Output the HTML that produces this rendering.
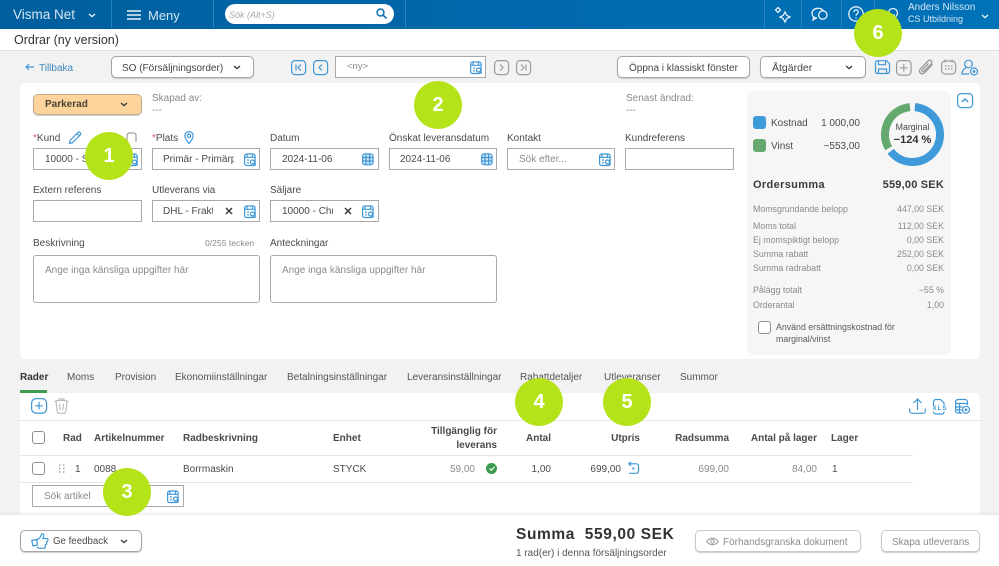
<!DOCTYPE html>
<html lang="sv"><head><meta charset="utf-8"><title>Ordrar</title>
<style>
html,body{margin:0;padding:0}
body{width:999px;height:566px;overflow:hidden;background:#f2f2f2;position:relative;font-family:"Liberation Sans",sans-serif;font-size:10px;color:#4a4a4a}
#w{position:absolute;inset:0;filter:blur(.35px)}
.a{position:absolute;box-sizing:border-box}
.t{position:absolute;white-space:nowrap;line-height:14px}
.t:not([style*="font-size"]):not(.s){margin-top:2px}
.r{text-align:right}
.g{color:#8a8a8a}
.b{font-weight:bold}
.s{font-size:8.8px}
.inp{position:absolute;box-sizing:border-box;height:22px;border:1px solid #a9a9a9;background:#fff}
.btn{position:absolute;box-sizing:border-box;height:22px;border:1px solid #a5a5a5;background:#fff;border-radius:5px;box-shadow:0 1px 1px #ccc}
.c{position:absolute;width:48px;height:48px;border-radius:50%;background:#b5e31a;color:#fff;font-weight:bold;font-size:20px;line-height:48px;text-align:center;z-index:5}
svg{position:absolute;overflow:visible;fill:none}
.bl{stroke:#3f97d6;stroke-width:1.2}
.gr{stroke:#9b9b9b;stroke-width:1.2}
.wh{stroke:#e8f2f9;stroke-width:1.3}
.sep{position:absolute;top:0;width:1px;height:28px;background:#2a83bd}
.cb{position:absolute;box-sizing:border-box;width:13px;height:13px;border:1px solid #8f8f8f;border-radius:3px;background:#fff}
.tab{position:absolute;top:371px;white-space:nowrap;line-height:14px;color:#555}
.line{position:absolute;height:1px;background:#e6e6e6}
</style></head><body>
<svg width="0" height="0" style="position:absolute"><defs>
<g id="look"><rect x=".6" y="1" width="10.5" height="11.5" rx="2"/><path d="M.6 4.300h10.500M3 1v3.300M8.500 1v3.300M3 7h2M3 9.800h2"/><circle cx="8.500" cy="9" r="2"/><path d="M10 10.500l1.800 1.800"/></g>
<g id="cal"><rect x=".6" y=".8" width="10.5" height="11" rx="2.500" fill="#cfe6f6"/><path d="M4 .8v11M7.600 .8v11M.6 4.500h10.500M.6 8h10.500"/></g>
<path id="chev" d="M0 0l3 2.600L6 0" stroke="#3d3d3d" stroke-width="1.400"/>
</defs></svg>
<div id="w">
<!-- top bar -->
<div class="a" style="left:0;top:0;width:999px;height:29px;background:linear-gradient(90deg,#005f9e 0,#0066a8 40%,#0072b9 100%)"></div>
<div class="sep" style="left:111px"></div><div class="sep" style="left:213px"></div><div class="sep" style="left:405px"></div>
<div class="sep" style="left:764px"></div><div class="sep" style="left:801px"></div><div class="sep" style="left:841px"></div><div class="sep" style="left:874px"></div>
<span class="t" style="left:13px;top:8px;font-size:13.500px;color:#d5e6f2">Visma Net</span>
<svg style="left:89px;top:14px" width="7" height="4"><path d="M0 0l3 2.600L6 0" stroke="#e8f2f9" stroke-width="1.400"/></svg>
<svg style="left:127px;top:10px" width="14" height="10"><path d="M0 1h14M0 5h14M0 9h14" stroke="#eaf3f9" stroke-width="1.600"/></svg>
<span class="t" style="left:148px;top:9px;font-size:13px;color:#d5e6f2">Meny</span>
<div class="a" style="left:225px;top:4px;width:169px;height:20px;border-radius:10px;background:#fff"></div>
<span class="t" style="left:229px;top:8px;font-size:9px;font-style:italic;color:#a8a8a8">Sök (Alt+S)</span>
<svg style="left:376px;top:8px" width="12" height="12"><circle cx="4.500" cy="4.500" r="3.400" stroke="#1678bb" stroke-width="1.600"/><path d="M7 7l3.500 3.500" stroke="#1678bb" stroke-width="1.800"/></svg>
<svg class="wh" style="left:776px;top:5px" width="18" height="18"><path d="M9 7l1.700 3.300L14 12l-3.300 1.700L9 17l-1.700-3.300L4 12l3.300-1.700z"/><path d="M2 2.500L4.500 5 2 7.500-.5 5z"/></svg>
<svg class="wh" style="left:811px;top:7px" width="17" height="14"><path d="M6 11C3 11 1 9 1 6.500 1 3.500 3.500 1.300 7 1.300c2.500 0 4.500 1 5.500 2.700"/><path d="M2.800 9.500L2 13l3.500-2"/><circle cx="11.800" cy="8" r="4.200"/></svg>
<svg class="wh" style="left:848px;top:6px" width="16" height="16"><circle cx="8" cy="8" r="7.200"/><path d="M5.800 6.200c0-3 4.500-3 4.500-.2 0 1.800-2.300 1.800-2.300 3.800M8 11.500v1.200"/></svg>
<svg class="wh" style="left:887px;top:7px" width="12" height="14"><circle cx="6" cy="6" r="4.500"/><path d="M4 8h4"/></svg>
<span class="t" style="left:908px;top:1px;font-size:10px;color:#d5e6f2">Anders Nilsson</span>
<span class="t" style="left:908px;top:12px;font-size:9px;color:#d5e6f2">CS Utbildning</span>
<svg style="left:982px;top:15px" width="7" height="4"><path d="M0 0l3 2.600L6 0" stroke="#e8f2f9" stroke-width="1.400"/></svg>
<!-- title -->
<div class="a" style="left:0;top:29px;width:999px;height:22px;background:#fff;border-bottom:1px solid #e2e2e2"></div>
<span class="t" style="left:14px;top:33px;font-size:12.500px;color:#333">Ordrar (ny version)</span>
<!-- toolbar -->
<svg class="bl" style="left:25px;top:63px" width="9" height="8"><path d="M9 4H1M4 1L1 4l3 3"/></svg>
<span class="t" style="left:39px;top:60px;color:#3f87bd">Tillbaka</span>
<div class="btn" style="left:111px;top:56px;width:143px"></div>
<span class="t" style="left:122px;top:60px;color:#444">SO (Försäljningsorder)</span>
<svg style="left:234px;top:66px" width="6" height="4"><use href="#chev"/></svg>
<svg class="bl" style="left:291px;top:60px" width="14" height="14"><rect x=".6" y=".6" width="14" height="14" rx="3.500"/><path d="M5 4.500v6M10 4.500L7 7.500l3 3"/></svg>
<svg class="bl" style="left:313px;top:60px" width="14" height="14"><rect x=".6" y=".6" width="14" height="14" rx="3.500"/><path d="M9 4.500L6 7.500l3 3"/></svg>
<div class="inp" style="left:335px;top:56px;width:151px"></div>
<span class="t" style="left:347px;top:60px;font-size:9.500px;color:#8a8a8a">&lt;ny&gt;</span>
<svg class="bl" style="left:470px;top:61px" width="12" height="13"><use href="#look"/></svg>
<svg class="gr" style="left:494px;top:60px" width="14" height="14"><rect x=".6" y=".6" width="14" height="14" rx="3.500"/><path d="M6 4.500l3 3-3 3"/></svg>
<svg class="gr" style="left:516px;top:60px" width="14" height="14"><rect x=".6" y=".6" width="14" height="14" rx="3.500"/><path d="M5 4.500l3 3-3 3M10 4.500v6"/></svg>
<div class="btn" style="left:617px;top:56px;width:133px"></div>
<span class="t" style="left:629px;top:60px;color:#444">Öppna i klassiskt fönster</span>
<div class="btn" style="left:760px;top:56px;width:106px"></div>
<span class="t" style="left:772px;top:61px;font-size:10.500px;color:#444">Åtgärder</span>
<svg style="left:846px;top:66px" width="6" height="4"><use href="#chev"/></svg>
<svg class="bl" style="left:875px;top:60px" width="15" height="14"><path d="M2.500.7h9l3 3v7.800a2 2 0 0 1-2 2h-10a2 2 0 0 1-2-2V2.700a2 2 0 0 1 2-2z"/><path d="M3.500.7v4h7v-4M3.500 13.500V9h8v4.500"/></svg>
<svg class="gr" style="left:896px;top:60px" width="15" height="15"><rect x=".6" y=".6" width="14.500" height="14.500" rx="3.500"/><path d="M7.800 4v7.500M4 7.800h7.500"/></svg>
<svg class="gr" style="left:918px;top:59px" width="16" height="16"><path d="M14.500 5.500L6.500 13.800c-3 2.500-6.500-.5-4.300-3.800L10 2c2-2 5.200.3 3.300 2.800L6 12.300c-1 1-2.700 0-1.800-1.300L10.500 4.500" stroke-width="1.300"/></svg>
<svg class="gr" style="left:941px;top:59px" width="15" height="15"><rect x=".6" y="2" width="14" height="13" rx="3.500"/><path d="M4 .5v3M11 .5v3"/><path d="M4 7h1.500M7 7h1.500M10 7h1.500M4 10h1.500M7 10h1.500M10 10h1.500" stroke-width="1.400"/></svg>
<svg class="bl" style="left:961px;top:59px" width="17" height="17"><circle cx="7.500" cy="5" r="3.800"/><path d="M5 8.500C3 10 1 12 .8 15h7.500"/><circle cx="13" cy="12.500" r="3.500"/><circle cx="13" cy="12.500" r=".8" fill="#3f97d6"/></svg>
<!-- main card -->
<div class="a" style="left:20px;top:83px;width:960px;height:276px;background:#fff;border-radius:6px"></div>
<div class="btn" style="left:33px;top:94px;width:109px;height:21px;background:#fdd49b;border-color:#c5ad8b"></div>
<span class="t b" style="left:45px;top:96px;color:#4a4136">Parkerad</span>
<svg style="left:121px;top:103px" width="6" height="4"><use href="#chev"/></svg>
<span class="t g" style="left:152px;top:90px">Skapad av:</span><span class="t g" style="left:152px;top:102px">---</span>
<span class="t g" style="left:626px;top:90px">Senast ändrad:</span><span class="t g" style="left:626px;top:102px">---</span>
<!-- labels row 1 -->
<span class="t" style="left:33px;top:130px"><span style="color:#d65a6c">*</span>Kund</span>
<svg class="bl" style="left:69px;top:131px" width="13" height="13"><path d="M1 9.500L9 1.500c1.500-1.200 3.500.8 2.300 2.300L3.300 11.800l-2.800.7zM8 2.500l2.500 2.500"/></svg>
<svg class="gr" style="left:126px;top:132px" width="11" height="13"><path d="M1 12V3.500A2.500 2.500 0 0 1 3.500 1h4A2.500 2.500 0 0 1 10 3.500V10"/></svg>
<span class="t" style="left:152px;top:130px"><span style="color:#d65a6c">*</span>Plats</span>
<svg class="bl" style="left:184px;top:131px" width="10" height="13"><path d="M5 12.500C3 10 .8 7.500.8 4.800a4.200 4.200 0 0 1 8.400 0C9.200 7.500 7 10 5 12.500z"/><circle cx="5" cy="4.800" r="1.700"/></svg>
<span class="t" style="left:270px;top:130px">Datum</span>
<span class="t" style="left:389px;top:130px">Önskat leveransdatum</span>
<span class="t" style="left:507px;top:130px">Kontakt</span>
<span class="t" style="left:625px;top:130px">Kundreferens</span>
<!-- inputs row 1 -->
<div class="inp" style="left:33px;top:148px;width:109px"></div><span class="t" style="left:45px;top:151px">10000 - Svensson</span>
<svg class="bl" style="left:126px;top:153px" width="12" height="13"><use href="#look"/></svg>
<div class="inp" style="left:152px;top:148px;width:108px"></div><span class="t" style="left:163px;top:151px;width:71px;overflow:hidden">Primär - Primärplats</span>
<svg class="bl" style="left:244px;top:153px" width="12" height="13"><use href="#look"/></svg>
<div class="inp" style="left:270px;top:148px;width:109px"></div><span class="t" style="left:282px;top:151px">2024-11-06</span>
<svg class="bl" style="left:362px;top:153px" width="12" height="12"><use href="#cal"/></svg>
<div class="inp" style="left:389px;top:148px;width:108px"></div><span class="t" style="left:400px;top:151px">2024-11-06</span>
<svg class="bl" style="left:481px;top:153px" width="12" height="12"><use href="#cal"/></svg>
<div class="inp" style="left:507px;top:148px;width:108px"></div><span class="t g" style="left:519px;top:151px">Sök efter...</span>
<svg class="bl" style="left:599px;top:153px" width="12" height="13"><use href="#look"/></svg>
<div class="inp" style="left:625px;top:148px;width:109px"></div>
<!-- row 2 -->
<span class="t" style="left:33px;top:182px">Extern referens</span>
<span class="t" style="left:152px;top:182px">Utleverans via</span>
<span class="t" style="left:270px;top:182px">Säljare</span>
<div class="inp" style="left:33px;top:200px;width:109px"></div>
<div class="inp" style="left:152px;top:200px;width:108px"></div><span class="t" style="left:163px;top:203px;width:50px;overflow:hidden">DHL - Frakt - express</span>
<svg style="left:225px;top:207px" width="8" height="8"><path d="M1 1l6 6M7 1L1 7" stroke="#3a3a3a" stroke-width="1.500"/></svg>
<svg class="bl" style="left:244px;top:205px" width="12" height="13"><use href="#look"/></svg>
<div class="inp" style="left:270px;top:200px;width:109px"></div><span class="t" style="left:282px;top:203px;width:51px;overflow:hidden">10000 - Christer</span>
<svg style="left:344px;top:207px" width="8" height="8"><path d="M1 1l6 6M7 1L1 7" stroke="#3a3a3a" stroke-width="1.500"/></svg>
<svg class="bl" style="left:362px;top:205px" width="12" height="13"><use href="#look"/></svg>
<!-- row 3 -->
<span class="t" style="left:33px;top:235px">Beskrivning</span>
<span class="t g" style="left:205px;top:236px;font-size:8.600px">0/255 tecken</span>
<span class="t" style="left:270px;top:235px">Anteckningar</span>
<div class="inp" style="left:33px;top:255px;width:227px;height:48px;border-radius:3px"></div>
<span class="t g" style="left:45px;top:262px">Ange inga känsliga uppgifter här</span>
<div class="inp" style="left:270px;top:255px;width:227px;height:48px;border-radius:3px"></div>
<span class="t g" style="left:282px;top:262px">Ange inga känsliga uppgifter här</span>
<!-- side panel -->
<div class="a" style="left:747px;top:91px;width:204px;height:264px;background:#f6f6f6;border-radius:6px"></div>
<svg class="bl" style="left:957px;top:93px" width="16" height="15"><rect x=".6" y=".6" width="15" height="14" rx="3.500"/><path d="M4.800 9l3.200-3 3.200 3" stroke-width="1.500"/></svg>
<div class="a" style="left:753px;top:116px;width:13px;height:13px;border-radius:3px;background:#3f9ada"></div>
<div class="a" style="left:753px;top:139px;width:13px;height:13px;border-radius:3px;background:#65a96f"></div>
<span class="t" style="left:771px;top:115px">Kostnad</span><span class="t r" style="right:139px;top:115px">1 000,00</span>
<span class="t" style="left:771px;top:138px">Vinst</span><span class="t r" style="right:139px;top:138px">−553,00</span>
<svg style="left:880px;top:102px" width="65" height="65" viewBox="0 0 65 65">
<circle cx="32.500" cy="32.500" r="27.500" stroke="#3f9ada" stroke-width="8" stroke-dasharray="109 64" transform="rotate(-85 32.500 32.500)"/>
<circle cx="32.500" cy="32.500" r="27.500" stroke="#65a96f" stroke-width="8" stroke-dasharray="55 118" transform="rotate(150 32.500 32.500)"/>
</svg>
<span class="t" style="left:880px;top:120px;width:65px;text-align:center;font-size:8.800px">Marginal</span>
<span class="t b" style="left:880px;top:133px;width:65px;text-align:center;font-size:11px;color:#333">−124 %</span>
<span class="t b" style="left:753px;top:178px;font-size:11px;color:#3a3a3a;letter-spacing:.35px">Ordersumma</span>
<span class="t b r" style="right:55px;top:178px;font-size:11px;color:#3a3a3a;letter-spacing:.2px">559,00 SEK</span>
<span class="t g s" style="left:753px;top:202px">Momsgrundande belopp</span><span class="t g r s" style="right:55px;top:202px">447,00 SEK</span>
<span class="t g s" style="left:753px;top:219px">Moms total</span><span class="t g r s" style="right:55px;top:219px">112,00 SEK</span>
<span class="t g s" style="left:753px;top:233px">Ej momspiktigt belopp</span><span class="t g r s" style="right:55px;top:233px">0,00 SEK</span>
<span class="t g s" style="left:753px;top:247px">Summa rabatt</span><span class="t g r s" style="right:55px;top:247px">252,00 SEK</span>
<span class="t g s" style="left:753px;top:261px">Summa radrabatt</span><span class="t g r s" style="right:55px;top:261px">0,00 SEK</span>
<span class="t g s" style="left:753px;top:283px">Pålägg totalt</span><span class="t g r s" style="right:55px;top:283px">−55 %</span>
<span class="t g s" style="left:753px;top:298px">Orderantal</span><span class="t g r s" style="right:55px;top:298px">1,00</span>
<div class="cb" style="left:758px;top:321px"></div>
<span class="t s" style="left:776px;top:320px;color:#5a5a5a">Använd ersättningskostnad för</span>
<span class="t s" style="left:776px;top:332px;color:#5a5a5a">marginal/vinst</span>
<!-- tabs -->
<span class="tab b" style="left:20px;color:#333">Rader</span>
<span class="tab" style="left:67px">Moms</span>
<span class="tab" style="left:115px">Provision</span>
<span class="tab" style="left:175px">Ekonomiinställningar</span>
<span class="tab" style="left:287px">Betalningsinställningar</span>
<span class="tab" style="left:407px">Leveransinställningar</span>
<span class="tab" style="left:520px">Rabattdetaljer</span>
<span class="tab" style="left:604px">Utleveranser</span>
<span class="tab" style="left:680px">Summor</span>
<div class="a" style="left:20px;top:390px;width:27px;height:2.500px;background:#3d9a4f"></div>
<!-- table card -->
<div class="a" style="left:20px;top:393px;width:960px;height:130px;background:#fff;border-radius:0 6px 0 0"></div>
<svg class="bl" style="left:31px;top:398px" width="16" height="16"><rect x=".6" y=".6" width="15" height="14.500" rx="4.500"/><path d="M8 4v7.500M4.200 7.800h7.600"/></svg>
<svg style="left:54px;top:398px;stroke:#b3b3b3;stroke-width:1" width="15" height="16"><path d="M.5 3.500c4-1.500 10-1.500 14 0M5 2.500V1h5v1.500M2 3.500l1.200 10c.2 1 1 1.700 2 1.700h4.600c1 0 1.800-.7 2-1.700L13 3.500M5.500 6c0 2 .2 4 .8 6M9.500 6c0 2-.2 4-.8 6"/></svg>
<svg class="bl" style="left:909px;top:398px" width="17" height="16"><path d="M8.500 12V1M4.500 5l4-4 4 4M.7 10.500v2.500c0 1.300 1 2.300 2.300 2.300h11c1.300 0 2.300-1 2.300-2.300v-2.500"/></svg>
<svg class="bl" style="left:932px;top:399px" width="15" height="15"><path d="M1.500 7V3A2.500 2.500 0 0 1 4 .5h4.500L12 4v2M1.500 12.500A2.500 2.500 0 0 0 4 15h6a2 2 0 0 0 2-2v-.5"/><text x=".5" y="11" font-family="Liberation Sans" font-size="6" font-weight="bold" fill="#3f97d6" stroke="none" textLength="14">XLS</text></svg>
<svg class="bl" style="left:955px;top:399px" width="15" height="15"><path d="M7 14H2.500A2 2 0 0 1 .6 12V3a2.500 2.500 0 0 1 2.500-2.500h7A2.500 2.500 0 0 1 12.500 3v3M.6 4.500h12M.6 8h7M.6 11h6M4.500 4.500V14"/><circle cx="11" cy="10.800" r="3.500"/><circle cx="11" cy="10.800" r=".8" fill="#3f97d6"/></svg>
<div class="line" style="left:20px;top:420px;width:960px"></div>
<div class="line" style="left:20px;top:455px;width:893px"></div>
<div class="line" style="left:20px;top:482px;width:893px"></div>
<div class="cb" style="left:32px;top:431px"></div>
<span class="t b" style="left:63px;top:430px">Rad</span>
<span class="t b" style="left:94px;top:430px">Artikelnummer</span>
<span class="t b" style="left:183px;top:430px">Radbeskrivning</span>
<span class="t b" style="left:333px;top:430px">Enhet</span>
<span class="t b r" style="right:502px;top:423px">Tillgänglig för</span>
<span class="t b r" style="right:502px;top:437px">leverans</span>
<span class="t b r" style="right:448px;top:430px">Antal</span>
<span class="t b r" style="right:359px;top:430px">Utpris</span>
<span class="t b r" style="right:270px;top:430px">Radsumma</span>
<span class="t b r" style="right:182px;top:430px">Antal på lager</span>
<span class="t b" style="left:831px;top:430px">Lager</span>
<div class="cb" style="left:32px;top:462px"></div>
<svg style="left:59px;top:464px" width="6" height="10"><path d="M0 1h1.500M4 1h1.500M0 4.500h1.500M4 4.500h1.500M0 8h1.500M4 8h1.500" stroke="#a5a5a5" stroke-width="1.400"/></svg>
<span class="t" style="left:75px;top:461px">1</span>
<span class="t" style="left:94px;top:461px">0088</span>
<span class="t" style="left:183px;top:461px">Borrmaskin</span>
<span class="t" style="left:333px;top:461px">STYCK</span>
<span class="t g r" style="right:524px;top:461px">59,00</span>
<div class="a" style="left:486px;top:463px;width:11px;height:11px;border-radius:50%;background:#3d9a4f"></div>
<svg style="left:488.500px;top:466px" width="6" height="5"><path d="M.5 2.500l1.800 1.800L5.500.7" stroke="#fff" stroke-width="1.100"/></svg>
<span class="t r" style="right:448px;top:461px">1,00</span>
<span class="t r" style="right:378px;top:461px">699,00</span>
<svg class="bl" style="left:628px;top:463px" width="11" height="11"><path d="M1 .8h7.500a2 2 0 0 1 2 2v5.500a2 2 0 0 1-2 2H1M3-1L.8.8 3 2.800"/><rect x="4.300" y="4.500" width="2" height="2" fill="#3f97d6" stroke="none"/></svg>
<span class="t g r" style="right:270px;top:461px">699,00</span>
<span class="t g r" style="right:182px;top:461px">84,00</span>
<span class="t" style="left:832px;top:461px">1</span>
<div class="inp" style="left:32px;top:485px;width:152px"></div>
<span class="t g" style="left:44px;top:488px">Sök artikel</span>
<svg class="bl" style="left:167px;top:490px" width="12" height="13"><use href="#look"/></svg>
<!-- footer -->
<div class="a" style="left:0;top:515px;width:999px;height:51px;background:#fff;box-shadow:0 -1px 3px #e3e3e3"></div>
<div class="btn" style="left:20px;top:530px;width:122px"></div>
<svg class="bl" style="left:31px;top:533px" width="18" height="17"><path d="M6 7l3-2.500L11 .8c1.500-.5 2.300 1 1.700 2.500L12 5.500h3.500c1.800 0 2 2 .8 3l-1 .5.5 2-1.500.8v2c0 1-.5 1.500-2 1.500H8.500c-1 0-2-.8-2.500-1.500"/><path d="M.8 7.500L5.500 6.500 6.500 12l-4.500 1z"/></svg>
<span class="t" style="left:53px;top:535px;font-size:9.700px">Ge feedback</span>
<svg style="left:121px;top:540px" width="6" height="4"><use href="#chev"/></svg>
<span class="t b" style="left:516px;top:528px;font-size:15.500px;color:#333;letter-spacing:.6px">Summa&nbsp; 559,00 SEK</span>
<span class="t" style="left:516px;top:545px;color:#555">1 rad(er) i denna försäljningsorder</span>
<div class="btn" style="left:695px;top:530px;width:166px;border-color:#c9c9c9"></div>
<svg style="left:706px;top:537px" width="13" height="9"><path d="M.7 4.500C3.500.3 9.500.3 12.300 4.500 9.500 8.700 3.500 8.700.7 4.500z" stroke="#9a9a9a" stroke-width="1.100"/><circle cx="6.500" cy="4.500" r="1.800" stroke="#9a9a9a"/></svg>
<span class="t g" style="left:723px;top:534px">Förhandsgranska dokument</span>
<div class="btn" style="left:881px;top:530px;width:99px;border-color:#c9c9c9"></div>
<span class="t g" style="left:892px;top:534px">Skapa utleverans</span>
<!-- circles -->
<div class="c" style="left:85px;top:132px">1</div>
<div class="c" style="left:414px;top:81px">2</div>
<div class="c" style="left:103px;top:468px">3</div>
<div class="c" style="left:515px;top:378px">4</div>
<div class="c" style="left:603px;top:378px">5</div>
<div class="c" style="left:854px;top:9px">6</div>
</div>
</body></html>
